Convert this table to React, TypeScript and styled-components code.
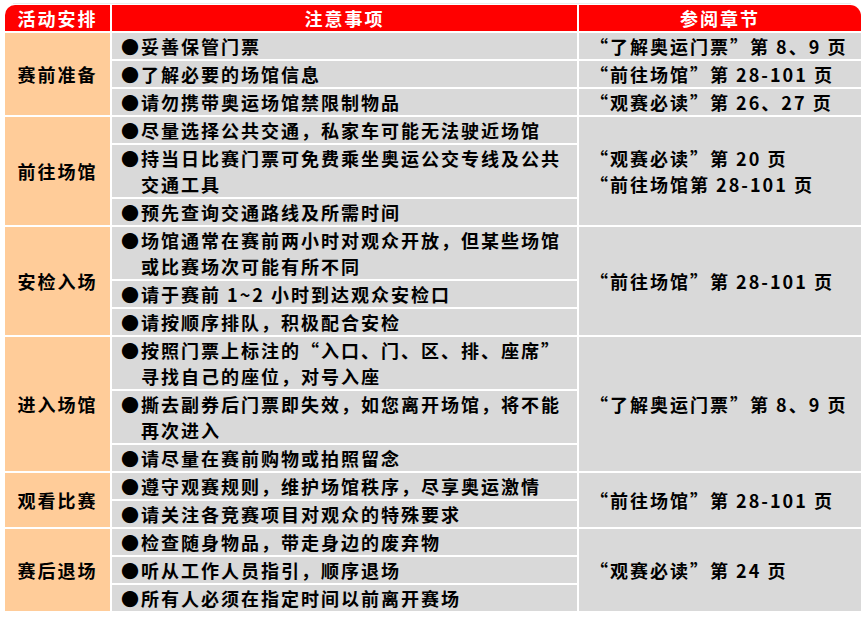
import React from 'react'
import styled, { createGlobalStyle } from 'styled-components'

type Item = string[]

type Group = {
  title: string
  items: Item[]
  refs: string[]
}

const groups: Group[] = [
  {
    title: '赛前准备',
    items: [['妥善保管门票'], ['了解必要的场馆信息'], ['请勿携带奥运场馆禁限制物品']],
    refs: [],
  },
  {
    title: '前往场馆',
    items: [
      ['尽量选择公共交通，私家车可能无法驶近场馆'],
      ['持当日比赛门票可免费乘坐奥运公交专线及公共', '交通工具'],
      ['预先查询交通路线及所需时间'],
    ],
    refs: ['“观赛必读”第 20 页', '“前往场馆第 28-101 页'],
  },
  {
    title: '安检入场',
    items: [
      ['场馆通常在赛前两小时对观众开放，但某些场馆', '或比赛场次可能有所不同'],
      ['请于赛前 1~2 小时到达观众安检口'],
      ['请按顺序排队，积极配合安检'],
    ],
    refs: ['“前往场馆”第 28-101 页'],
  },
  {
    title: '进入场馆',
    items: [
      ['按照门票上标注的“入口、门、区、排、座席”', '寻找自己的座位，对号入座'],
      ['撕去副券后门票即失效，如您离开场馆，将不能', '再次进入'],
      ['请尽量在赛前购物或拍照留念'],
    ],
    refs: ['“了解奥运门票”第 8、9 页'],
  },
  {
    title: '观看比赛',
    items: [['遵守观赛规则，维护场馆秩序，尽享奥运激情'], ['请关注各竞赛项目对观众的特殊要求']],
    refs: ['“前往场馆”第 28-101 页'],
  },
  {
    title: '赛后退场',
    items: [['检查随身物品，带走身边的废弃物'], ['听从工作人员指引，顺序退场'], ['所有人必须在指定时间以前离开赛场']],
    refs: ['“观赛必读”第 24 页'],
  },
]

// first group has one reference per item row
const firstRefs = ['“了解奥运门票”第 8、9 页', '“前往场馆”第 28-101 页', '“观赛必读”第 26、27 页']

const App = () => {
  return (
    <>
      <GlobalStyle />
      <Page>
        <Rule />
        <Table>
          <HeadCell $corner='left'>活动安排</HeadCell>
          <HeadCell>注意事项</HeadCell>
          <HeadCell $corner='right'>参阅章节</HeadCell>

          {groups.map((group, gi) => (
            <React.Fragment key={group.title}>
              <Category>{group.title}</Category>
              {gi === 0 ? (
                <SplitCell>
                  {group.items.map((item, i) => (
                    <ItemRow key={i}>
                      <Bullet>●</Bullet>
                      <ItemText>{item[0]}</ItemText>
                      <RefInline>{firstRefs[i]}</RefInline>
                    </ItemRow>
                  ))}
                </SplitCell>
              ) : (
                <>
                  <Items>
                    {group.items.map((item, i) => (
                      <ItemRow key={i}>
                        <Bullet>●</Bullet>
                        <ItemText>
                          {item.map((line, li) => (
                            <div key={li}>{line}</div>
                          ))}
                        </ItemText>
                      </ItemRow>
                    ))}
                  </Items>
                  <Refs>
                    {group.refs.map((r) => (
                      <div key={r}>{r}</div>
                    ))}
                  </Refs>
                </>
              )}
            </React.Fragment>
          ))}
        </Table>
      </Page>
    </>
  )
}

const GlobalStyle = createGlobalStyle`
  html, body {
    margin: 0;
    padding: 0;
    background: #ffffff;
  }
  body {
    font-family: "Noto Sans CJK SC", "Noto Sans", sans-serif;
  }
`

const Page = styled.div`
  padding: 3px 0 0 5px;
  width: 856px;
`

const Rule = styled.div`
  height: 1px;
  margin: 0 10px 1px 8px;
  background: #ebebeb;
`

const Table = styled.div`
  display: grid;
  grid-template-columns: 105px 465px 282px;
  gap: 2px;
  font-size: 18px;
  font-weight: 700;
  letter-spacing: 2px;
  line-height: 26px;
  color: #000000;
`

const HeadCell = styled.div<{ $corner?: 'left' | 'right' }>`
  height: 26px;
  background: #ff0000;
  color: #ffffff;
  text-align: center;
  border-top-left-radius: ${(p) => (p.$corner === 'left' ? '10px' : '0')};
  border-top-right-radius: ${(p) => (p.$corner === 'right' ? '11px' : '0')};
`

const Category = styled.div`
  background: #ffcc99;
  display: flex;
  align-items: center;
  justify-content: center;
`

const Items = styled.div`
  display: flex;
  flex-direction: column;
  gap: 2px;
`

const SplitCell = styled.div`
  grid-column: 2 / span 2;
  display: flex;
  flex-direction: column;
  gap: 2px;
`

const ItemRow = styled.div`
  display: flex;
  background: #d9d9d9;
  padding-left: 9px;
  white-space: nowrap;
`

const Bullet = styled.span`
  width: 20px;
  flex: none;
`

const ItemText = styled.div`
  flex: 1;
`

const RefInline = styled.div`
  width: 271px;
  flex: none;
  padding-left: 11px;
  border-left: 2px solid #ffffff;
`

const Refs = styled.div`
  background: #d9d9d9;
  display: flex;
  flex-direction: column;
  justify-content: center;
  padding-left: 11px;
  white-space: nowrap;
`

export default App
